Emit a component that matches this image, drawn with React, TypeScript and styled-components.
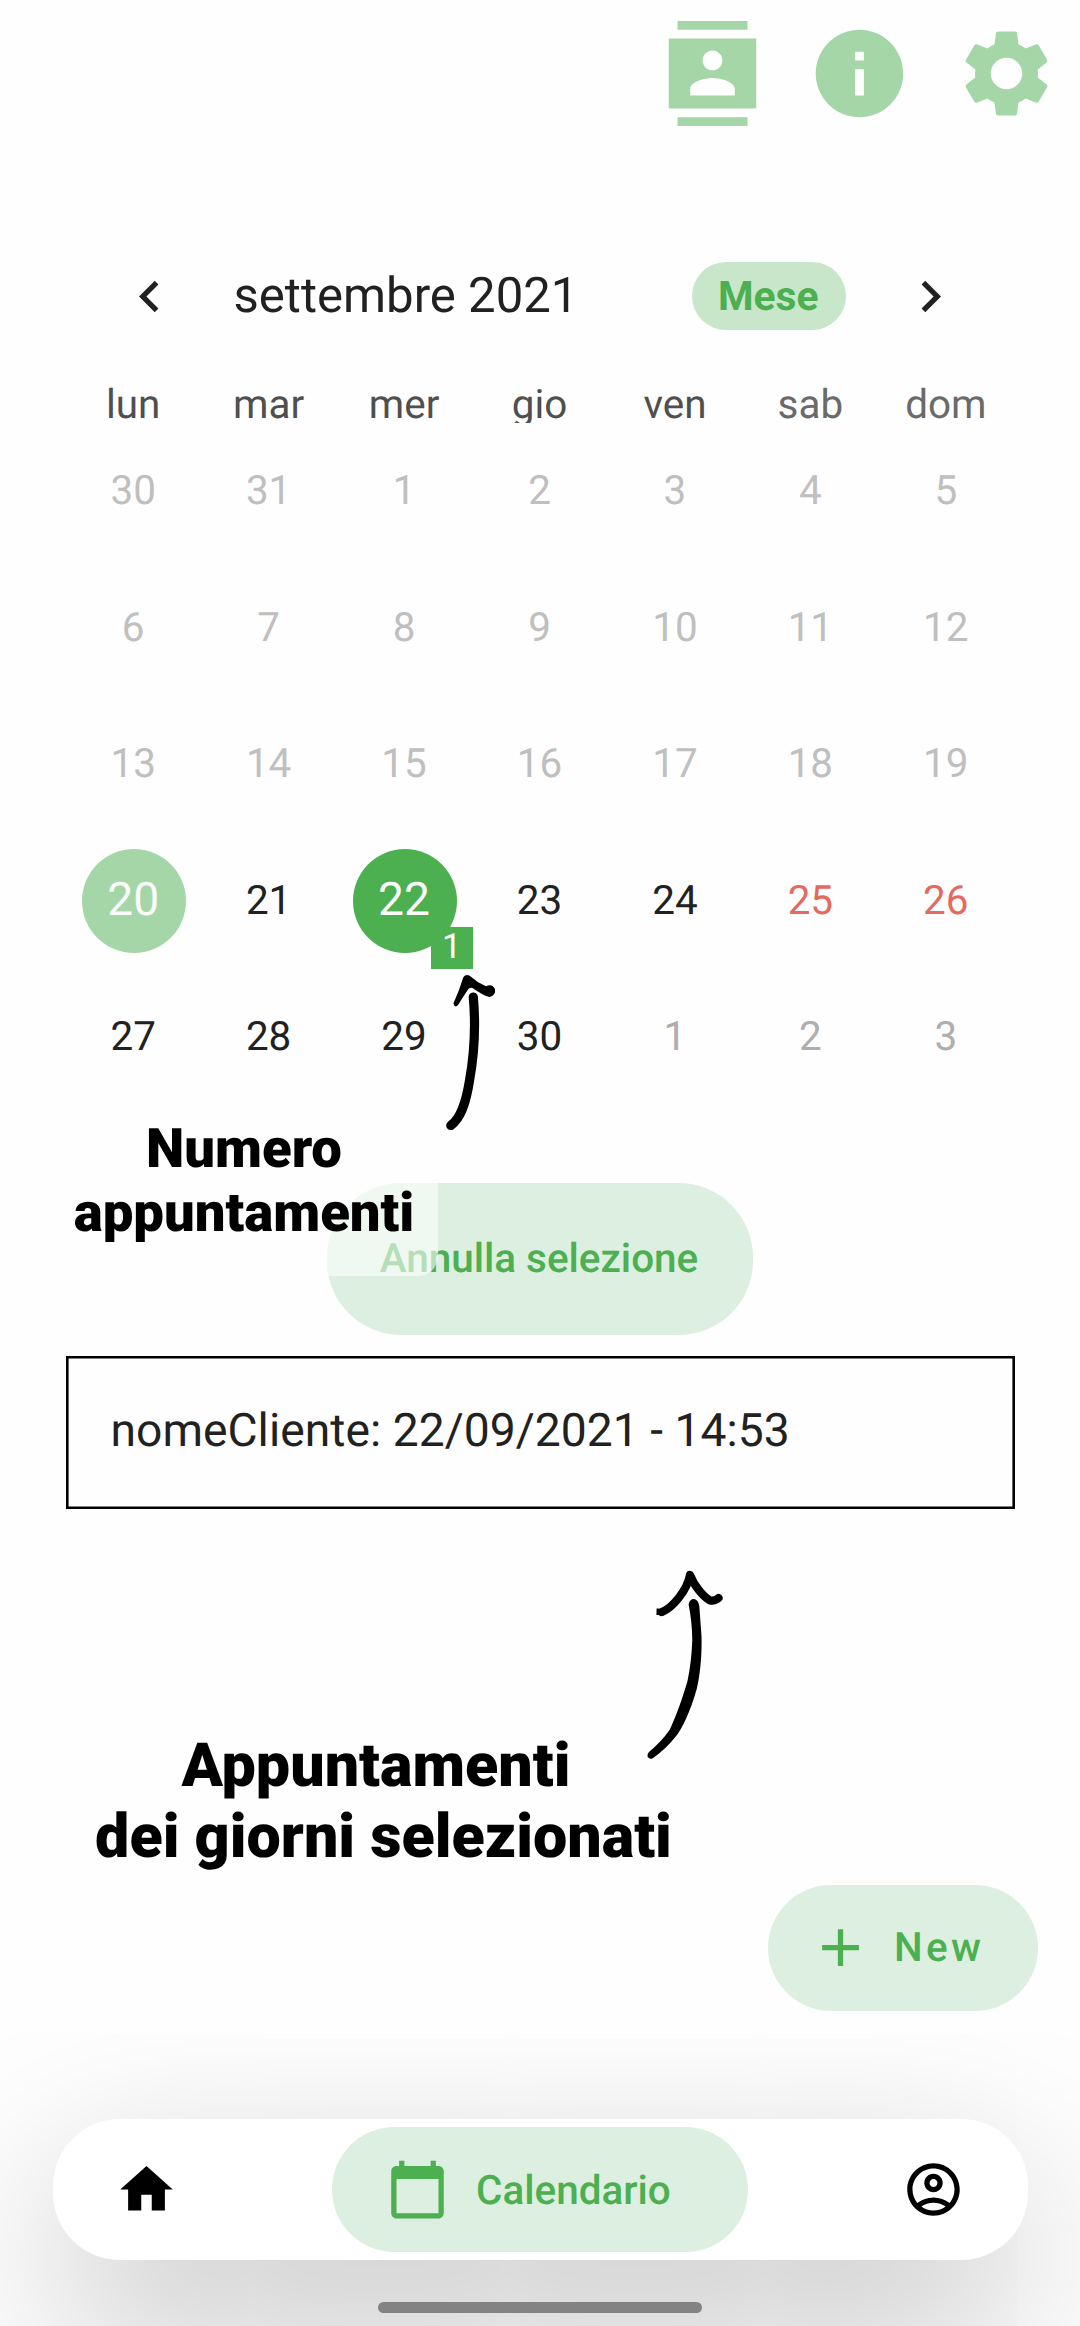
import React from "react";
import styled, { createGlobalStyle } from "styled-components";

const GlobalStyle = createGlobalStyle`
  * { box-sizing: border-box; }
  html, body { margin: 0; padding: 0; background: #fefefe; }
  body { font-family: Roboto, "Liberation Sans", sans-serif; color: #212121; text-rendering: geometricPrecision; }
  button { font-family: inherit; border: 0; padding: 0; background: none; color: inherit; text-rendering: inherit; }
`;

const green = "#4caf50";
const greenSoft = "#a5d6a7";
const greenTint = "#ddefe0";

const Screen = styled.div`
  position: relative;
  width: 1080px;
  height: 2326px;
  overflow: hidden;
  display: flex;
  flex-direction: column;
`;

const TopBar = styled.header`
  display: flex;
  justify-content: flex-end;
  gap: 42px;
  padding: 21px;
  height: 147px;
  color: ${greenSoft};
`;

const Glyph = styled.svg<{ $size: number }>`
  display: block;
  flex: none;
  width: ${(p) => p.$size}px;
  height: ${(p) => p.$size}px;
  fill: currentColor;
`;

const Calendar = styled.section`
  padding: 65px 66px 0;
`;

const CalendarHeader = styled.div`
  display: flex;
  align-items: center;
  height: 168.75px;
  padding: 0 52.5px 0 52px;
`;

const MonthTitle = styled.h1`
  flex: 1;
  margin: 0 0 0 52.5px;
  font-size: 49.1px;
  line-height: 58px;
  font-weight: 400;
  white-space: nowrap;
  padding-bottom: 3px;
`;

const FormatButton = styled.button`
  width: 154.5px;
  height: 68px;
  margin-right: 52.5px;
  padding-left: 26.5px;
  text-align: left;
  border-radius: 34px;
  background: #c8e6c9;
  color: ${green};
  font-size: 40.7px;
  font-weight: 700;
  line-height: 68px;
`;

const WeekHeader = styled.div`
  display: grid;
  grid-template-columns: repeat(7, 1fr);
  height: 42px;
  overflow: hidden;
`;

const WeekdayName = styled.span<{ $weekend: boolean }>`
  text-align: center;
  padding-right: 1px;
  font-size: 40.43px;
  line-height: 47px;
  color: ${(p) => (p.$weekend ? "#6a6a6a" : "#4f4f4f")};
`;

const DayGrid = styled.div`
  display: grid;
  grid-template-columns: repeat(7, 1fr);
  grid-auto-rows: 136.5px;
`;

type DayKind = "disabled" | "normal" | "weekend" | "outside" | "today" | "selected";

const dayColors: Record<DayKind, string> = {
  disabled: "#bfbfbf",
  normal: "#212121",
  weekend: "#e5695f",
  outside: "#aeaeae",
  today: "#fafafa",
  selected: "#fafafa",
};

const DayCell = styled.div`
  position: relative;
  display: flex;
  align-items: center;
  justify-content: center;
`;

const DayNumber = styled.span<{ $kind: DayKind }>`
  display: flex;
  align-items: center;
  justify-content: center;
  width: 104px;
  height: 104px;
  padding: 0 1px 2px 0;
  border-radius: 50%;
  color: ${(p) => dayColors[p.$kind]};
  font-size: ${(p) => (p.$kind === "today" || p.$kind === "selected" ? 46.2 : 40.43)}px;
  background: ${(p) =>
    p.$kind === "today" ? greenSoft : p.$kind === "selected" ? green : "transparent"};
`;

const CountBadge = styled.span`
  position: absolute;
  right: -0.5px;
  bottom: 0;
  width: 42px;
  height: 42px;
  background: ${green};
  color: #fff;
  font-size: 34.65px;
  line-height: 41px;
  text-align: center;
`;

const ClearButton = styled.button`
  align-self: center;
  flex: none;
  width: 426px;
  height: 152.25px;
  margin-top: 77.5px;
  border-radius: 74px;
  background: ${greenTint};
  color: ${green};
  font-size: 40.43px;
  font-weight: 500;
  padding: 0 2px 2px 0;
`;

const AppointmentCard = styled.div`
  display: flex;
  align-items: center;
  flex: none;
  height: 152.5px;
  margin: 21px 65px 0 66px;
  padding: 0 0 2px 44.5px;
  box-shadow: inset 0 0 0 2.6px #000;
  font-size: 46.2px;
  letter-spacing: 0.04px;
`;

const Spacer = styled.div`
  flex: 1;
`;

const NewButton = styled.button`
  align-self: flex-end;
  flex: none;
  display: flex;
  align-items: center;
  gap: 22px;
  width: 270.5px;
  height: 126px;
  margin-right: 42px;
  padding: 0 0 1px 41.5px;
  border-radius: 63px;
  background: ${greenTint};
  color: ${green};
  font-size: 40.43px;
  font-weight: 500;
  letter-spacing: 3.28px;
  z-index: 1;
`;

const NavBar = styled.nav`
  flex: none;
  display: flex;
  align-items: center;
  justify-content: space-between;
  height: 141.75px;
  margin: 107.7px 52.5px 0;
  padding: 0 62px;
  border-radius: 67px;
  background: #fff;
  color: #000;
  box-shadow: 0 66px 180px rgba(0, 0, 0, 0.25);
`;

const ActiveTab = styled.button`
  display: flex;
  align-items: center;
  gap: 26.7px;
  width: 415.3px;
  height: 125.5px;
  padding-left: 54px;
  border-radius: 63px;
  background: ${greenTint};
  color: ${green};
  font-size: 40.43px;
  font-weight: 500;
`;

const HomeIndicator = styled.div`
  flex: none;
  align-self: center;
  width: 324px;
  height: 11px;
  margin: 41.8px 0 12.8px;
  border-radius: 5.5px;
  background: #838383;
  z-index: 1;
`;

const Veil = styled.div`
  position: absolute;
  left: 0;
  top: 1100px;
  width: 438px;
  height: 176px;
  border-bottom-right-radius: 20px;
  background: rgba(254, 254, 254, 0.6);
`;

const Note = styled.p<{ $x: number; $y: number; $w: number; $size: number; $line: number }>`
  position: absolute;
  left: ${(p) => p.$x}px;
  top: ${(p) => p.$y}px;
  width: ${(p) => p.$w}px;
  margin: 0;
  text-align: center;
  white-space: pre;
  font-size: ${(p) => p.$size}px;
  line-height: ${(p) => p.$line}px;
  font-weight: 900;
  color: #000;
`;

const Arrow = styled.svg`
  position: absolute;
  left: 0;
  top: 0;
  width: 1080px;
  height: 2326px;
  pointer-events: none;
  fill: none;
  stroke: #000;
  stroke-linecap: round;
  stroke-linejoin: round;
`;

function Icon({ size, d }: { size: number; d: string }) {
  return (
    <Glyph $size={size} viewBox="0 0 24 24" aria-hidden>
      <path d={d} />
    </Glyph>
  );
}

const icons = {
  contacts:
    "M20 0H4v2h16V0zM4 24h16v-2H4v2zM22 4H2v16h20V4zM12 6.75c1.24 0 2.25 1.01 2.25 2.25s-1.01 2.25-2.25 2.25S9.75 10.24 9.75 9 10.76 6.75 12 6.75zM17.1 17H6.9v-1.5c0-1.67 3.4-2.5 5.1-2.5s5.1.83 5.1 2.5V17z",
  info: "M12 2C6.48 2 2 6.48 2 12s4.48 10 10 10 10-4.48 10-10S17.52 2 12 2zm1 15h-2v-6h2v6zm0-8h-2V7h2v2z",
  settings:
    "M19.14 12.94c.04-.3.06-.61.06-.94 0-.32-.02-.64-.07-.94l2.03-1.58c.18-.14.23-.41.12-.61l-1.92-3.32c-.12-.22-.37-.29-.59-.22l-2.39.96c-.5-.38-1.03-.7-1.62-.94L14.4 2.81c-.04-.24-.24-.41-.48-.41h-3.84c-.24 0-.43.17-.47.41L9.25 5.35C8.66 5.59 8.12 5.92 7.63 6.29L5.24 5.33c-.22-.08-.47 0-.59.22L2.74 8.87c-.12.21-.08.47.12.61l2.03 1.58C4.84 11.36 4.8 11.69 4.8 12s.02.64.07.94l-2.03 1.58c-.18.14-.23.41-.12.61l1.92 3.32c.12.22.37.29.59.22l2.39-.96c.5.38 1.03.7 1.62.94l.36 2.54c.05.24.24.41.48.41h3.84c.24 0 .44-.17.47-.41l.36-2.54c.59-.24 1.13-.56 1.62-.94l2.39.96c.22.08.47 0 .59-.22l1.92-3.32c.12-.22.07-.47-.12-.61l-2.01-1.58zM12 15.6c-1.98 0-3.6-1.62-3.6-3.6s1.62-3.6 3.6-3.6 3.6 1.62 3.6 3.6-1.62 3.6-3.6 3.6z",
  left: "M15.41 7.41L14 6l-6 6 6 6 1.41-1.41L10.83 12z",
  right: "M10 6L8.59 7.41 13.17 12l-4.58 4.59L10 18l6-6z",
  plus: "M19 13h-6v6h-2v-6H5v-2h6V5h2v6h6v2z",
  home: "M10 20v-6h4v6h5v-8h3L12 3 2 12h3v8z",
  calendar:
    "M20 3h-1V1h-2v2H7V1H5v2H4c-1.1 0-2 .9-2 2v16c0 1.1.9 2 2 2h16c1.1 0 2-.9 2-2V5c0-1.1-.9-2-2-2zm0 18H4V8h16v13z",
  account:
    "M12 2C6.48 2 2 6.48 2 12s4.48 10 10 10 10-4.48 10-10S17.52 2 12 2zM7.35 18.5C8.66 17.56 10.26 17 12 17s3.34.56 4.65 1.5C15.34 19.44 13.74 20 12 20s-3.34-.56-4.65-1.5zm10.79-1.38C16.45 15.8 14.32 15 12 15s-4.45.8-6.14 2.12C4.7 15.73 4 13.95 4 12c0-4.42 3.58-8 8-8s8 3.58 8 8c0 1.95-.7 3.73-1.86 5.12zM12 6c-1.93 0-3.5 1.57-3.5 3.5S10.07 13 12 13s3.5-1.57 3.5-3.5S13.93 6 12 6zm0 5c-.83 0-1.5-.67-1.5-1.5S11.17 8 12 8s1.5.67 1.5 1.5S12.83 11 12 11z",
};

const weekdays = ["lun", "mar", "mer", "gio", "ven", "sab", "dom"];

type Day = { n: number; kind: DayKind; count?: number };
const range = (a: number, b: number, kind: DayKind): Day[] =>
  Array.from({ length: b - a + 1 }, (_, i) => ({ n: a + i, kind }));

const days: Day[] = [
  ...range(30, 31, "disabled"),
  ...range(1, 19, "disabled"),
  { n: 20, kind: "today" },
  { n: 21, kind: "normal" },
  { n: 22, kind: "selected", count: 1 },
  ...range(23, 24, "normal"),
  ...range(25, 26, "weekend"),
  ...range(27, 30, "normal"),
  ...range(1, 3, "outside"),
];

export default function App() {
  return (
    <Screen>
      <GlobalStyle />
      <TopBar>
        <Icon size={105} d={icons.contacts} />
        <Icon size={105} d={icons.info} />
        <Icon size={105} d={icons.settings} />
      </TopBar>

      <Calendar>
        <CalendarHeader>
          <Icon size={63} d={icons.left} />
          <MonthTitle>settembre 2021</MonthTitle>
          <FormatButton>Mese</FormatButton>
          <Icon size={63} d={icons.right} />
        </CalendarHeader>
        <WeekHeader>
          {weekdays.map((name, i) => (
            <WeekdayName key={name} $weekend={i > 4}>
              {name}
            </WeekdayName>
          ))}
        </WeekHeader>
        <DayGrid>
          {days.map((day, i) => (
            <DayCell key={i}>
              <DayNumber $kind={day.kind}>{day.n}</DayNumber>
              {day.count && <CountBadge>{day.count}</CountBadge>}
            </DayCell>
          ))}
        </DayGrid>
      </Calendar>

      <ClearButton>Annulla selezione</ClearButton>
      <AppointmentCard>nomeCliente: 22/09/2021 - 14:53</AppointmentCard>
      <Spacer />

      <NewButton>
        <Icon size={63} d={icons.plus} />
        New
      </NewButton>
      <NavBar>
        <Icon size={63} d={icons.home} />
        <ActiveTab>
          <Icon size={63} d={icons.calendar} />
          Calendario
        </ActiveTab>
        <Icon size={63} d={icons.account} />
      </NavBar>
      <HomeIndicator />

      <Veil />
      <Note $x={43.5} $y={1117} $w={401} $size={54.5} $line={64.2}>
        {"Numero\nappuntamenti"}
      </Note>
      <Note $x={83.5} $y={1730} $w={600} $size={61} $line={71}>
        {"Appuntamenti \ndei giorni selezionati"}
      </Note>
      <Arrow viewBox="0 0 1080 2326" aria-hidden>
        <path
          d="M453.4 1003.5 L459 990 L463.2 977.5 Q466 973.5 470 976 Q477 982.5 486 986.3 Q492 983 495 989 Q496 995.5 489.5 997 Q483 995.5 472.5 988 Q469 987 467 991 L458 1005 Q455 1008.5 453.4 1003.5Z"
          fill="#000"
          stroke="none"
        />
        <path d="M473.3 997 C475.5 1022 475 1050 469.6 1080 C466 1103 461 1118 450.8 1125.5" strokeWidth="9.2" />
        <path d="M656.5 1611.8 L663 1612" strokeWidth="6.5" strokeLinecap="butt" />
        <path
          d="M662 1612 C672 1608 687 1591 690 1575 C694 1586 704 1597 710 1600.5 Q714.5 1601.5 718.5 1598"
          strokeWidth="8.2"
        />
        <path
          d="M688.6 1604.5 Q689.5 1599 694 1599 Q698.5 1600 699.3 1606 L701.5 1636 C702.2 1660 699 1680 697 1688 C690 1713 682 1728 677 1735 Q666 1749 652.8 1758.3 Q649.5 1760 647.5 1756.5 Q647 1754 649 1752 Q662 1741 669.5 1730 C675 1719 683 1697 687.5 1681 Q691.5 1662 692.3 1640 Q692 1621 688.6 1604.5Z"
          fill="#000"
          stroke="none"
        />
      </Arrow>
    </Screen>
  );
}
